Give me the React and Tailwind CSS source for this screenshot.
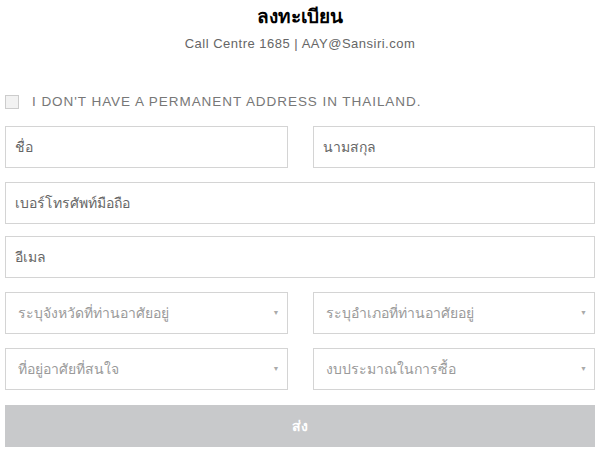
import React from 'react';

function TextField({ placeholder, className = '' }) {
  return (
    <div className={`h-[42px] border border-[#d4d4d4] bg-white flex items-center px-[9px] ${className}`}>
      <span className="text-[14px] text-[#666]">{placeholder}</span>
    </div>
  );
}

function SelectField({ placeholder }) {
  return (
    <div className="h-[42px] border border-[#d4d4d4] bg-white flex items-center justify-between pl-[12px] pr-[7px]">
      <span className="text-[14px] text-[#9a9a9a]">{placeholder}</span>
      <span className="text-[7px] text-[#aaa]">▼</span>
    </div>
  );
}

export default function App() {
  return (
    <div className="w-[600px] h-[450px] bg-white overflow-hidden font-['Liberation_Sans',sans-serif]">
      <div className="flex flex-col items-center pt-[4px]">
        <h1 className="text-[19px] font-bold text-black leading-[26px]">ลงทะเบียน</h1>
        <p className="text-[13px] text-[#666] mt-[7px] leading-[14px] tracking-[0.5px]">Call Centre 1685 | AAY@Sansiri.com</p>
      </div>

      <div className="px-[5px] mt-[44px]">
        <label className="flex items-center gap-[13px] h-[14px]">
          <span className="w-[14px] h-[14px] border border-[#ccc] bg-[#f2f2f2]" />
          <span className="text-[13.5px] text-[#777] tracking-[0.95px]">I DON'T HAVE A PERMANENT ADDRESS IN THAILAND.</span>
        </label>

        <div className="mt-[17px] flex flex-col">
          <div className="grid grid-cols-2 gap-[25px]">
            <TextField placeholder="ชื่อ" />
            <TextField placeholder="นามสกุล" />
          </div>
          <TextField placeholder="เบอร์โทรศัพท์มือถือ" className="mt-[14px]" />
          <TextField placeholder="อีเมล" className="mt-[12px]" />
          <div className="grid grid-cols-2 gap-[25px] mt-[14px]">
            <SelectField placeholder="ระบุจังหวัดที่ท่านอาศัยอยู่" />
            <SelectField placeholder="ระบุอำเภอที่ท่านอาศัยอยู่" />
          </div>
          <div className="grid grid-cols-2 gap-[25px] mt-[14px]">
            <SelectField placeholder="ที่อยู่อาศัยที่สนใจ" />
            <SelectField placeholder="งบประมาณในการซื้อ" />
          </div>
          <button className="h-[42px] mt-[15px] bg-[#c8c9cb] text-white text-[14px] font-bold">ส่ง</button>
        </div>
      </div>
    </div>
  );
}
